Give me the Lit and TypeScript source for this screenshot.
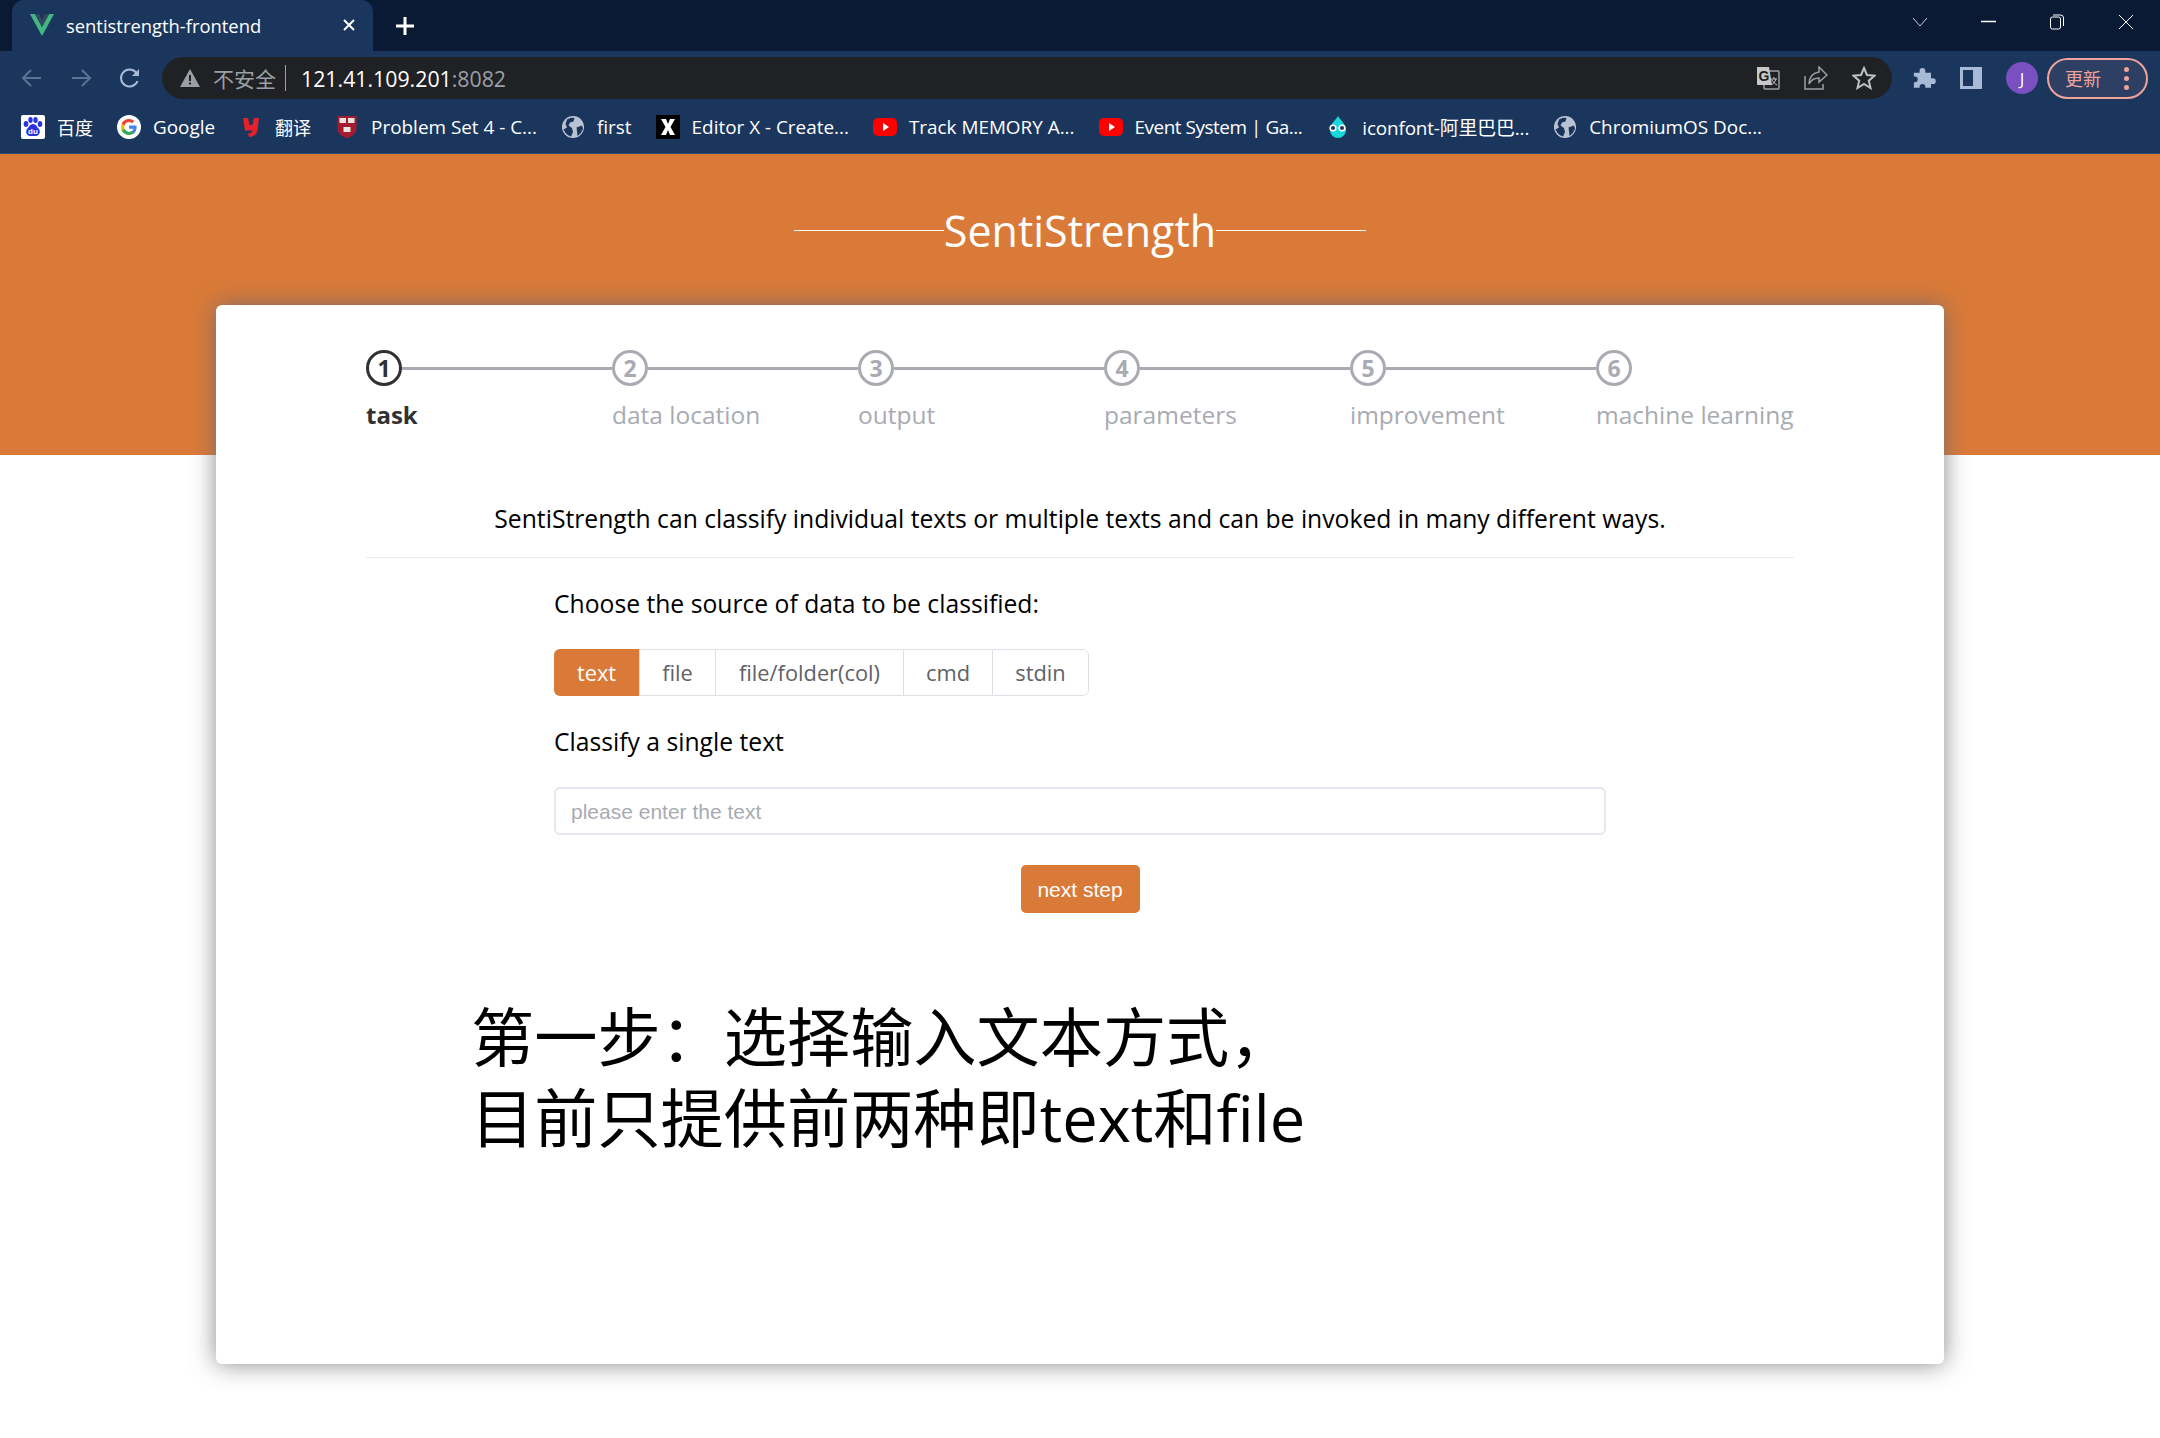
import { LitElement, html, css, svg } from "lit";
import { customElement } from "lit/decorators.js";

const globe = svg`<svg width="24" height="24" viewBox="0 0 24 24"><circle cx="12" cy="12" r="11" fill="#b9c3d3"/><path d="M6 4.500c2.500-1.500 5-2 7.500-1.500l-1 3.500-3.500 1-1.500 3 3.500 2.500 1 4-2 4.500c-3.500-1-6-3.500-7.500-7l3.500-2-1.500-3.500zM15.500 12.500l5.500-2 1 3.500-2.500 4.500-3 2.500-.5-4.500z" fill="#1b365d"/></svg>`;
const yt = svg`<svg width="24" height="24" viewBox="0 0 24 24"><rect y="3" width="24" height="18" rx="5" fill="#f00"/><path d="M10 8l6 4-6 4z" fill="#fff"/></svg>`;

const marks: [string, unknown, string][] = [
  ["百度", svg`<svg width="24" height="24" viewBox="0 0 24 24"><rect width="24" height="24" rx="2" fill="#fff"/><g fill="#2932e1"><ellipse cx="5" cy="9" rx="2.300" ry="3"/><ellipse cx="9.500" cy="5" rx="2.200" ry="3"/><ellipse cx="14.500" cy="5" rx="2.200" ry="3"/><ellipse cx="19" cy="9" rx="2.300" ry="3"/><path d="M12 9c-3 0-4 3-6 5-2 3 0 7 3 7h6c3 0 5-4 3-7-2-2-3-5-6-5z"/></g><text x="12" y="19" font-size="8" font-family="Liberation Sans" font-weight="700" fill="#fff" text-anchor="middle">du</text></svg>`, "cjk"],
  ["Google", svg`<svg width="24" height="24" viewBox="0 0 24 24"><circle cx="12" cy="12" r="12" fill="#fff"/><path d="M19.600 12.200c0-.6 0-1.100-.2-1.700H12v3.200h4.300c-.2 1-.8 1.900-1.600 2.500v2h2.600c1.500-1.400 2.300-3.500 2.300-6z" fill="#4285f4"/><path d="M12 20c2.200 0 4-.7 5.300-1.900l-2.600-2c-.7.500-1.600.8-2.700.8-2.100 0-3.900-1.400-4.500-3.300H4.700v2.100C6 18.300 8.800 20 12 20z" fill="#34a853"/><path d="M7.500 13.600c-.3-1-.3-2.100 0-3.100V8.300H4.700c-1 1.900-1 5.400 0 7.400z" fill="#fbbc05"/><path d="M12 7.100c1.200 0 2.200.4 3 1.200l2.300-2.300C15.900 4.700 14.100 4 12 4 8.800 4 6 5.800 4.700 8.300l2.800 2.200C8.100 8.500 9.900 7.100 12 7.100z" fill="#ea4335"/></svg>`, ""],
  ["翻译", svg`<svg width="24" height="24" viewBox="0 0 24 24"><path d="M4 3h5l1.500 7h3L15 3h5l-1.500 12c-.5 4-3.500 6.500-8.500 7l-1-3.500c2.500-.2 4-1 4.500-3H6z" fill="#e8202a"/></svg>`, "cjk"],
  ["Problem Set 4 - C...", svg`<svg width="24" height="24" viewBox="0 0 24 24"><path d="M2.500 1h19v13c0 4-4 7-9.500 9.500C6.500 21 2.500 18 2.500 14z" fill="#a51c30"/><g fill="#e8e4e0"><rect x="4.500" y="3" width="6.500" height="5"/><rect x="13" y="3" width="6.500" height="5"/><rect x="8.500" y="12" width="7" height="5"/></g></svg>`, ""],
  ["first", globe, ""],
  ["Editor X - Create...", svg`<svg width="24" height="24" viewBox="0 0 24 24"><rect width="24" height="24" fill="#000"/><path d="M5 4h5l2 5 2-5h5l-4.500 8L19 20h-5l-2-5-2 5H5l4.500-8z" fill="#fff"/></svg>`, ""],
  ["Track MEMORY A...", yt, ""],
  ["Event System | Ga...", yt, "tight"],
  ["iconfont-阿里巴巴...", svg`<svg width="24" height="24" viewBox="0 0 24 24"><path d="M12 1c2 4 8 8 8 14a8 8 0 0 1-16 0C4 9 10 5 12 1z" fill="#19d8dc"/><circle cx="7" cy="13" r="3.600" fill="#fff"/><circle cx="16" cy="13" r="3.600" fill="#fff"/><circle cx="7" cy="13" r="2" fill="#17325a"/><circle cx="16" cy="13" r="2" fill="#17325a"/></svg>`, "snug"],
  ["ChromiumOS Doc...", globe, ""],
];

const steps = ["task", "data location", "output", "parameters", "improvement", "machine learning"];
const sources = ["text", "file", "file/folder(col)", "cmd", "stdin"];

@customElement("app-root")
export class AppRoot extends LitElement {
  static styles = css`
    :host { display: block; width: 2160px; height: 1438px; overflow: hidden; background: #fff; font-family: "Open Sans", "Noto Sans", "Noto Sans CJK SC", sans-serif; }
    .tabstrip { height: 51px; background: #0a1a35; display: flex; align-items: flex-end; padding-left: 12px; }
    .tab { width: 361px; height: 51px; box-sizing: border-box; background: #1b365d; border-radius: 12px 12px 0 0; display: flex; align-items: center; padding: 0 17px 1px 18px; color: #fff; font-size: 18.4px; }
    .tab .title { flex: 1; margin-left: 12px; }
    .plus { margin: 0 0 0 22px; align-self: center; display: flex; }
    .winctl { margin-left: auto; display: flex; align-self: flex-start; height: 43px; align-items: center; gap: 53px; padding-right: 26px; }
    .toolbar { height: 54px; background: #1b365d; display: flex; align-items: flex-start; padding-top: 6px; box-sizing: border-box; }
    .nav { display: flex; align-items: center; height: 42px; width: 162px; padding-left: 21px; box-sizing: border-box; gap: 27px; }
    .omni { width: 1730px; height: 42px; border-radius: 21px; background: #202124; display: flex; align-items: center; padding: 0 16px 0 18px; box-sizing: border-box; color: #fff; font-size: 21.3px; }
    .insecure { color: #9aa0a6; margin-left: 13px; font-size: 21px; }
    .sep { width: 1px; height: 26px; background: #9aa0a6; margin: 0 15px 0 9px; }
    .port { color: #9aa0a6; }
    .omni-icons { margin-left: auto; display: flex; align-items: center; gap: 24px; }
    .right { display: flex; align-items: center; height: 42px; margin-left: 20px; gap: 24px; }
    .avatar { width: 32px; height: 32px; border-radius: 50%; background: #7a4fc0; color: #fff; font-size: 17px; display: flex; align-items: center; justify-content: center; }
    .update { width: 101px; height: 41px; margin-left: -15px; box-sizing: border-box; border: 2px solid #f0a39b; border-radius: 21px; background: #2d3f63; color: #f0a39b; font-size: 18px; display: flex; align-items: center; padding-left: 16px; gap: 23px; }
    .dots { display: flex; flex-direction: column; gap: 4px; }
    .dots i { width: 5px; height: 5px; border-radius: 50%; background: #f0a39b; display: block; }
    .bookmarks { height: 49px; background: #1b365d; border-bottom: 1px solid #2f4b72; box-sizing: border-box; display: flex; align-items: center; padding: 0 0 5px 21px; color: #fff; font-size: 18.9px; gap: 24px; }
    .bm { display: flex; align-items: center; gap: 12px; white-space: nowrap; }
    .bm svg { display: block; }
    .bm .cjk { font-size: 18px; }
    .bm .tight { letter-spacing: -0.45px; }
    .bm .snug { letter-spacing: -0.15px; }
    .hero { height: 301px; background: #da7a38; display: flex; justify-content: center; padding-top: 43px; box-sizing: border-box; }
    .hero-title { display: flex; align-items: center; height: 66px; color: #fff; font-size: 43px; }
    .hero-title::before, .hero-title::after { content: ""; width: 150px; height: 1px; background: #fff; }
    .card { width: 1728px; height: 1059px; margin: -150px auto 0; background: #fff; border-radius: 6px; box-shadow: 0 0 24px rgba(105,105,115,.8); padding: 45px 150px 0; box-sizing: border-box; position: relative; }
    .steps { display: grid; grid-template-columns: repeat(5, 246px) 1fr; }
    .step .head { display: flex; align-items: center; height: 36px; }
    .num { width: 36px; height: 36px; border-radius: 50%; border: 3px solid #a8abb2; box-sizing: border-box; color: #a8abb2; font-size: 23px; font-weight: 700; display: flex; align-items: center; justify-content: center; flex: none; background: #fff; }
    .line { flex: 1; height: 3px; background: #a8abb2; }
    .label { color: #a8abb2; font-size: 24.5px; margin-top: 11px; line-height: 36px; height: 34px; white-space: nowrap; }
    .step.on .num { border-color: #303133; color: #303133; }
    .step.on .label { color: #303133; font-weight: 700; font-size: 24px; }
    .desc { margin-top: 66px; height: 60px; border-bottom: 1px solid #ebebeb; text-align: center; font-size: 24.7px; color: #000; line-height: 44px; box-sizing: content-box; }
    .form { padding: 0 188px; }
    .q { font-size: 24.7px; color: #000; line-height: 36px; margin-top: 28px; }
    .group { display: flex; margin-top: 27px; height: 47px; width: max-content; border-radius: 6px; overflow: hidden; font-size: 21.8px; color: #606266; }
    .group span { display: flex; align-items: center; justify-content: center; border: 1px solid #dcdfe6; border-right: 0; box-sizing: border-box; }
    .group span:first-child { border: 0; background: #da7a38; color: #fff; }
    .group span:last-child { border-right: 1px solid #dcdfe6; border-radius: 0 6px 6px 0; }
    .q2 { margin-top: 28px; }
    .input { margin-top: 27px; height: 48px; border: 2px solid #e4e7ed; border-radius: 6px; box-sizing: border-box; display: flex; align-items: center; padding: 1px 0 0 15px; font-family: "Liberation Sans", sans-serif; font-size: 21px; color: #a8abb2; }
    .btn-row { display: flex; justify-content: center; margin-top: 30px; }
    .btn { width: 119px; height: 48px; padding-top: 1px; box-sizing: border-box; background: #da7a38; border-radius: 5px; color: #fff; font-family: "Liberation Sans", sans-serif; font-size: 21px; display: flex; align-items: center; justify-content: center; }
    .note { margin: 83px 0 0 -83px; font-size: 63.2px; line-height: 81px; color: #000; white-space: nowrap; }
  `;

  render() {
    const widths = [85, 76, 188, 89, 97];
    return html`
      <div class="tabstrip">
        <div class="tab">
          <svg width="24" height="22" viewBox="0 0 24 22"><path d="M0 0h5l7 13L19 0h5L12 22z" fill="#41b883"/><path d="M5 0h4l3 6 3-6h4l-7 13z" fill="#34495e"/></svg>
          <span class="title">sentistrength-frontend</span>
          <svg width="14" height="14" viewBox="0 0 14 14"><path d="M2 2l10 10M12 2L2 12" stroke="#fff" stroke-width="2"/></svg>
        </div>
        <div class="plus"><svg width="20" height="20" viewBox="0 0 20 20"><path d="M10 1v18M1 10h18" stroke="#fff" stroke-width="3"/></svg></div>
        <div class="winctl">
          <svg width="16" height="10" viewBox="0 0 16 10"><path d="M1 1l7 8 7-8" fill="none" stroke="#c8ced8" stroke-width="1"/></svg>
          <svg width="15" height="3" viewBox="0 0 15 3"><path d="M0 1.500h15" stroke="#fff" stroke-width="1.500"/></svg>
          <svg width="16" height="16" viewBox="0 0 16 16"><path d="M1.500 5v8a2 2 0 0 0 2 2h6a2 2 0 0 0 2-2V5a2 2 0 0 0-2-2h-6a2 2 0 0 0-2 2zM4 1h7.500a3 3 0 0 1 3 3v8" fill="none" stroke="#fff" stroke-width="1"/></svg>
          <svg width="16" height="16" viewBox="0 0 16 16"><path d="M1 1l14 14M15 1L1 15" stroke="#fff" stroke-width="1"/></svg>
        </div>
      </div>
      <div class="toolbar">
        <div class="nav">
          <svg width="22" height="20" viewBox="0 0 22 20"><path d="M20 10H3M10 2l-8 8 8 8" fill="none" stroke="#5d7393" stroke-width="2"/></svg>
          <svg width="22" height="20" viewBox="0 0 22 20"><path d="M2 10h17M12 2l8 8-8 8" fill="none" stroke="#5d7393" stroke-width="2"/></svg>
          <svg width="22" height="22" viewBox="0 0 22 22"><path d="M18.500 14a8.500 8.500 0 1 1-1.500-8.500" fill="none" stroke="#a9bad6" stroke-width="2"/><path d="M20 2v7h-7z" fill="#a9bad6"/></svg>
        </div>
        <div class="omni">
          <svg width="20" height="18" viewBox="0 0 20 18"><path d="M10 0l10 18H0z" fill="#9aa0a6"/><path d="M9 6h2v6H9zM9 13.500h2v2H9z" fill="#202124"/></svg>
          <span class="insecure">不安全</span><span class="sep"></span>
          <span>121.41.109.201</span><span class="port">:8082</span>
          <div class="omni-icons">
            <svg width="24" height="24" viewBox="0 0 24 24"><rect x="8" y="5" width="15" height="18" rx="1" fill="none" stroke="#9aa0a6" stroke-width="1.500"/><path d="M1 1h12l3 18H2a1 1 0 0 1-1-1z" fill="#c8c8c8"/><text x="2.500" y="14.500" font-size="14" font-family="Liberation Sans" font-weight="700" fill="#202124">G</text><path d="M15 13h6M18 11v2M20 13c-1 3-3 5-5 6M16 14c1 2 3 4 5 5" fill="none" stroke="#c8c8c8" stroke-width="1"/></svg>
            <svg width="24" height="24" viewBox="0 0 24 24"><path d="M15 1l8 8-8 7v-4c-5 0-8 2-10 6 0-7 4-11 10-12z" fill="none" stroke="#9aa0a6" stroke-width="1.500"/><path d="M1 10v13h18v-5" fill="none" stroke="#9aa0a6" stroke-width="1.500"/></svg>
            <svg width="24" height="24" viewBox="0 0 24 24"><path d="M12 2l3 7 7.500.7-5.700 5 1.700 7.300L12 18l-6.500 4 1.700-7.300-5.700-5L9 9z" fill="none" stroke="#bdc1c6" stroke-width="2"/></svg>
          </div>
        </div>
        <div class="right">
          <svg width="24" height="24" viewBox="0 0 24 24"><path d="M2 7h6V5a3 3 0 0 1 6 0v2h6v6h2a3 3 0 0 1 0 6h-2v4h-6v-1a3 3 0 0 0-6 0v1H2v-6h1a3 3 0 0 0 0-6H2z" fill="#a9bad6" transform="scale(.95)"/></svg>
          <svg width="22" height="22" viewBox="0 0 22 22"><rect x="1.500" y="1.500" width="19" height="19" fill="none" stroke="#a9bad6" stroke-width="3"/><rect x="13" y="1.500" width="7.500" height="19" fill="#a9bad6"/></svg>
          <div class="avatar">J</div>
          <div class="update"><span>更新</span><span class="dots"><i></i><i></i><i></i></span></div>
        </div>
      </div>
      <div class="bookmarks">
        ${marks.map(([t, i, cls]) => html`<div class="bm">${i}<span class=${cls}>${t}</span></div>`)}
      </div>
      <div class="hero"><div class="hero-title">SentiStrength</div></div>
      <div class="card">
        <div class="steps">
          ${steps.map((s, i) => html`<div class="step ${i === 0 ? "on" : ""}">
            <div class="head"><div class="num">${i + 1}</div>${i < 5 ? html`<div class="line"></div>` : ""}</div>
            <div class="label">${s}</div>
          </div>`)}
        </div>
        <div class="desc">SentiStrength can classify individual texts or multiple texts and can be invoked in many different ways.</div>
        <div class="form">
          <div class="q">Choose the source of data to be classified:</div>
          <div class="group">${sources.map((s, i) => html`<span style="width:${widths[i]}px">${s}</span>`)}</div>
          <div class="q q2">Classify a single text</div>
          <div class="input">please enter the text</div>
          <div class="btn-row"><div class="btn">next step</div></div>
          <div class="note">第一步：选择输入文本方式，<br />目前只提供前两种即text和file</div>
        </div>
      </div>
    `;
  }
}
